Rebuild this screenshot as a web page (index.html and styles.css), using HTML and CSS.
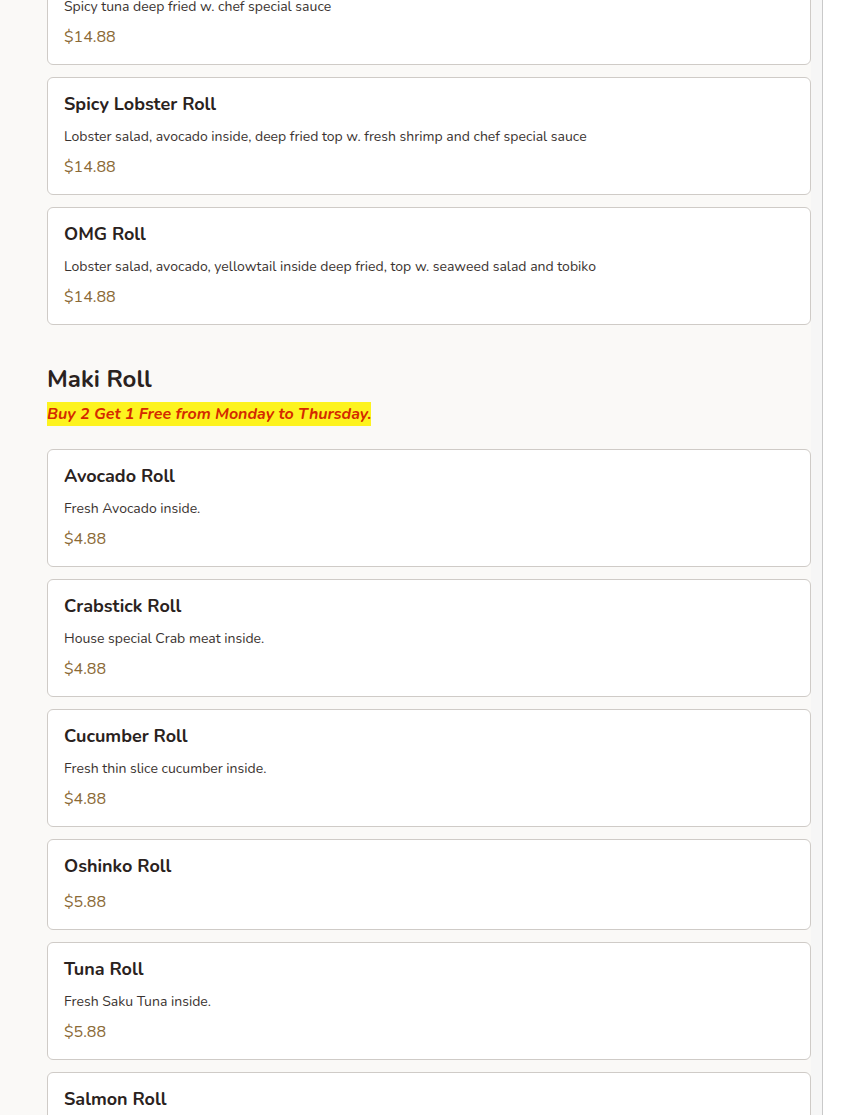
FILE: index.html
```html
<!DOCTYPE html>
<html lang="en">
<head>
<meta charset="utf-8">
<title>Menu</title>
<link rel="stylesheet" href="styles.css">
</head>
<body>
<div class="page">
  <main class="menu">
    <section class="section first">
      <div class="items">
        <article class="item">
          <h3 class="item-name">Spicy Tuna Crunch Roll</h3>
          <p class="item-desc">Spicy tuna deep fried w. chef special sauce</p>
          <p class="item-price">$14.88</p>
        </article>
        <article class="item">
          <h3 class="item-name">Spicy Lobster Roll</h3>
          <p class="item-desc">Lobster salad, avocado inside, deep fried top w. fresh shrimp and chef special sauce</p>
          <p class="item-price">$14.88</p>
        </article>
        <article class="item">
          <h3 class="item-name">OMG Roll</h3>
          <p class="item-desc">Lobster salad, avocado, yellowtail inside deep fried, top w. seaweed salad and tobiko</p>
          <p class="item-price">$14.88</p>
        </article>
      </div>
    </section>
    <section class="section">
      <h2 class="section-title">Maki Roll</h2>
      <p class="promo"><span class="promo-mark">Buy 2 Get 1 Free from Monday to Thursday.</span></p>
      <div class="items">
        <article class="item">
          <h3 class="item-name">Avocado Roll</h3>
          <p class="item-desc">Fresh Avocado inside.</p>
          <p class="item-price">$4.88</p>
        </article>
        <article class="item">
          <h3 class="item-name">Crabstick Roll</h3>
          <p class="item-desc">House special Crab meat inside.</p>
          <p class="item-price">$4.88</p>
        </article>
        <article class="item">
          <h3 class="item-name">Cucumber Roll</h3>
          <p class="item-desc">Fresh thin slice cucumber inside.</p>
          <p class="item-price">$4.88</p>
        </article>
        <article class="item">
          <h3 class="item-name">Oshinko Roll</h3>
          <p class="item-price">$5.88</p>
        </article>
        <article class="item">
          <h3 class="item-name">Tuna Roll</h3>
          <p class="item-desc">Fresh Saku Tuna inside.</p>
          <p class="item-price">$5.88</p>
        </article>
        <article class="item">
          <h3 class="item-name">Salmon Roll</h3>
          <p class="item-desc">Fresh Salmon inside.</p>
          <p class="item-price">$5.88</p>
        </article>
      </div>
    </section>
  </main>
  <aside class="side"></aside>
</div>
</body>
</html>
```

FILE: styles.css
```css
html, body {
  margin: 0;
  padding: 0;
}
body {
  background: #ffffff;
  font-family: "Nunito", "Noto Sans", "Open Sans", sans-serif;
  color: #2a2220;
  overflow: hidden;
  height: 1115px;
}
.page {
  display: flex;
  align-items: stretch;
  min-height: 1115px;
}
.menu {
  width: 823px;
  box-sizing: border-box;
  background: #faf9f7;
  padding: 0 11px 0 47px;
  border-right: 1px solid #c9c9c9;
  position: relative;
}
.menu::after {
  content: "";
  position: absolute;
  top: 0;
  bottom: 0;
  right: 0;
  width: 11px;
  background: #f6f6f6;
}
.side {
  flex: 1;
  background: #ffffff;
}
.section.first {
  margin-top: -53px;
}
.items {
  display: flex;
  flex-direction: column;
  gap: 12px;
}
.item {
  background: #ffffff;
  border: 1px solid #cfcbc7;
  border-radius: 6px;
  padding: 16px 16px 15px;
  display: flex;
  flex-direction: column;
}
.item-name {
  margin: 0 0 12px;
  font-size: 18px;
  line-height: 20px;
  font-weight: 700;
  color: #2a2220;
}
.item-name + .item-price {
  margin-top: 2px;
}
.item-desc {
  margin: 0 0 8px;
  font-size: 14px;
  line-height: 21px;
  color: #3a3330;
}
.item-price {
  margin: 0;
  font-size: 16px;
  line-height: 24px;
  color: #8b6a36;
}
.section-title {
  margin: 38px 0 7px;
  font-size: 24px;
  line-height: 32px;
  font-weight: 700;
  color: #2a2220;
}
.promo {
  margin: 0 0 23px;
  font-size: 16px;
  line-height: 24px;
  font-weight: 700;
  font-style: italic;
  color: #d42a00;
}
.promo-mark {
  background: #fdf31f;
  padding: 1px 0;
}
```
